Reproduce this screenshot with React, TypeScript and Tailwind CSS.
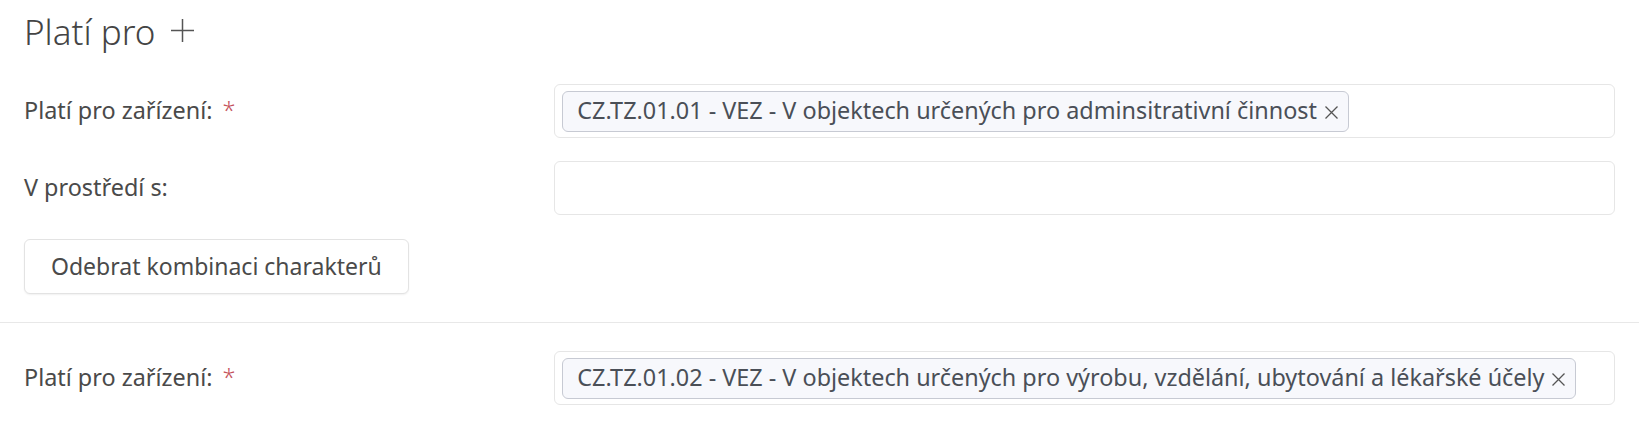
import React from "react";

function Tag({ text }: { text: string }) {
  return (
    <span className="flex h-[41px] items-center gap-[7px] rounded-[6px] border border-[#c7cad3] bg-[#f7f8fc] pl-[14px] pr-[9px] text-[23.4px] leading-none text-[#4a4f57]">
      <span>{text}</span>
      <svg width="15" height="15" viewBox="0 0 15 15" className="mt-[2px]">
        <path d="M1.5 1.5 L13.5 13.5 M13.5 1.5 L1.5 13.5" stroke="#555" strokeWidth="1.3" fill="none" />
      </svg>
    </span>
  );
}

function Row({ label, required, tag }: { label: string; required?: boolean; tag?: string }) {
  return (
    <div className="grid grid-cols-3 items-center">
      <div className="text-[23.4px] text-[#4a4a4a]">
        {label}
        {required && <span className="ml-[10px] font-light text-[#c5535c]">*</span>}
      </div>
      <div className="col-span-2 flex h-[54px] items-center rounded-[6px] border border-[#e6e6e6] px-[7px]">
        {tag && <Tag text={tag} />}
      </div>
    </div>
  );
}

export default function App() {
  return (
    <div className="min-h-[421px] bg-white font-['Noto_Sans',sans-serif] text-[#4a4a4a]">
      <div className="px-6 pt-[10px]">
        <h2 className="flex items-center gap-[15px] text-[35px] font-light leading-[44px] text-[#444]">
          <span>Platí pro</span>
          <svg width="25" height="25" viewBox="0 0 25 25" className="-mt-[4px]">
            <path d="M12.5 1 V24 M1 12.5 H24" stroke="#555" strokeWidth="1.5" fill="none" />
          </svg>
        </h2>
        <div className="mt-[30px]">
          <Row
            label="Platí pro zařízení:"
            required
            tag="CZ.TZ.01.01 - VEZ - V objektech určených pro adminsitrativní činnost"
          />
        </div>
        <div className="mt-[23px]">
          <Row label="V prostředí s:" />
        </div>
        <button className="mt-[24px] h-[55px] rounded-[6px] border border-[#e3e3e3] bg-white px-[26px] text-[23px] text-[#4a4a4a] shadow-[0_1px_2px_rgba(0,0,0,0.06)]">
          Odebrat kombinaci charakterů
        </button>
      </div>
      <div className="mt-[28px] border-t border-[#e8e8e8]" />
      <div className="px-6 pt-[28px]">
        <Row
          label="Platí pro zařízení:"
          required
          tag="CZ.TZ.01.02 - VEZ - V objektech určených pro výrobu, vzdělání, ubytování a lékařské účely"
        />
      </div>
    </div>
  );
}
